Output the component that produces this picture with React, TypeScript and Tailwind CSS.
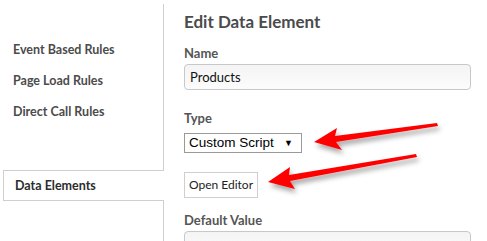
import React from 'react';

const sideItems = ['Event Based Rules', 'Page Load Rules', 'Direct Call Rules'];

const Arrows: React.FC = () => (
  <svg className="absolute left-0 top-0 pointer-events-none" width="487" height="241" viewBox="0 0 487 241">
    <defs>
      <filter id="shadow" x="-20%" y="-50%" width="140%" height="200%">
        <feDropShadow dx="2" dy="4" stdDeviation="2.5" floodColor="#000" floodOpacity="0.35" />
      </filter>
    </defs>
    <g fill="#ff0000" filter="url(#shadow)">
      <polygon points="437,123 438,126 336,142 342,150 314,142 337,128 335,136" />
      <polygon points="416,154 417,157 290,181 295,189 268,182 290,167 289,175" />
    </g>
  </svg>
);

const App: React.FC = () => {
  return (
    <div className="relative w-[487px] h-[241px] overflow-hidden bg-white flex" style={{ fontFamily: 'Lato, "Open Sans", sans-serif' }}>
      {/* sidebar */}
      <div className="w-[164px] flex flex-col pt-[4px]">
        <div className="h-[166px] border-r border-[#cfcfcf] pt-[30px]">
          {sideItems.map((item) => (
            <div key={item} className="pl-[13px] leading-[31px] text-[12.5px] font-bold text-[#4b4b4b]">
              {item}
            </div>
          ))}
        </div>
        <div className="ml-[3px] h-[31px] border-t border-b border-l border-[#cfcfcf] pl-[11px] leading-[29px] text-[12.5px] font-bold text-[#2c2c2c]">
          Data Elements
        </div>
        <div className="flex-1 border-r border-[#cfcfcf]" />
      </div>

      {/* main */}
      <div className="flex-1 pl-[20px] pr-[16px] pt-[10px]">
        <h1 className="leading-[24px] text-[17px] font-bold text-[#4b4b4b]">Edit Data Element</h1>

        <div className="mt-[11px] leading-[16px] text-[13px] font-bold text-[#555]">Name</div>
        <div className="mt-[3px] h-[26px] rounded-[4px] border border-[#c8c8c8] bg-gradient-to-b from-[#f4f4f4] to-[#fcfcfc] pl-[5px] leading-[24px] text-[13px] text-[#111]">
          Products
        </div>

        <div className="mt-[20px] leading-[16px] text-[13px] font-bold text-[#555]">Type</div>
        <div
          className="mt-[7px] w-[118px] h-[20px] border border-[#9a9a9a] flex items-center justify-between pl-[4px] pr-[8px] text-[13.5px] text-black"
          style={{ fontFamily: '"Liberation Sans", Arial, sans-serif' }}
        >
          <span className="leading-[18px]">Custom Script</span>
          <span className="text-[9px] leading-[18px]">▼</span>
        </div>

        <div className="mt-[19px] w-[74px] h-[26px] border border-[#cfcfcf] flex items-center justify-center text-[12px] text-[#222]">
          Open Editor
        </div>

        <div className="mt-[14px] leading-[16px] text-[13px] font-bold text-[#555]">Default Value</div>
        <div className="mt-[3px] h-[26px] rounded-[4px] border border-[#c8c8c8] bg-gradient-to-b from-[#f4f4f4] to-[#fcfcfc]" />
      </div>

      <Arrows />
    </div>
  );
};

export default App;
